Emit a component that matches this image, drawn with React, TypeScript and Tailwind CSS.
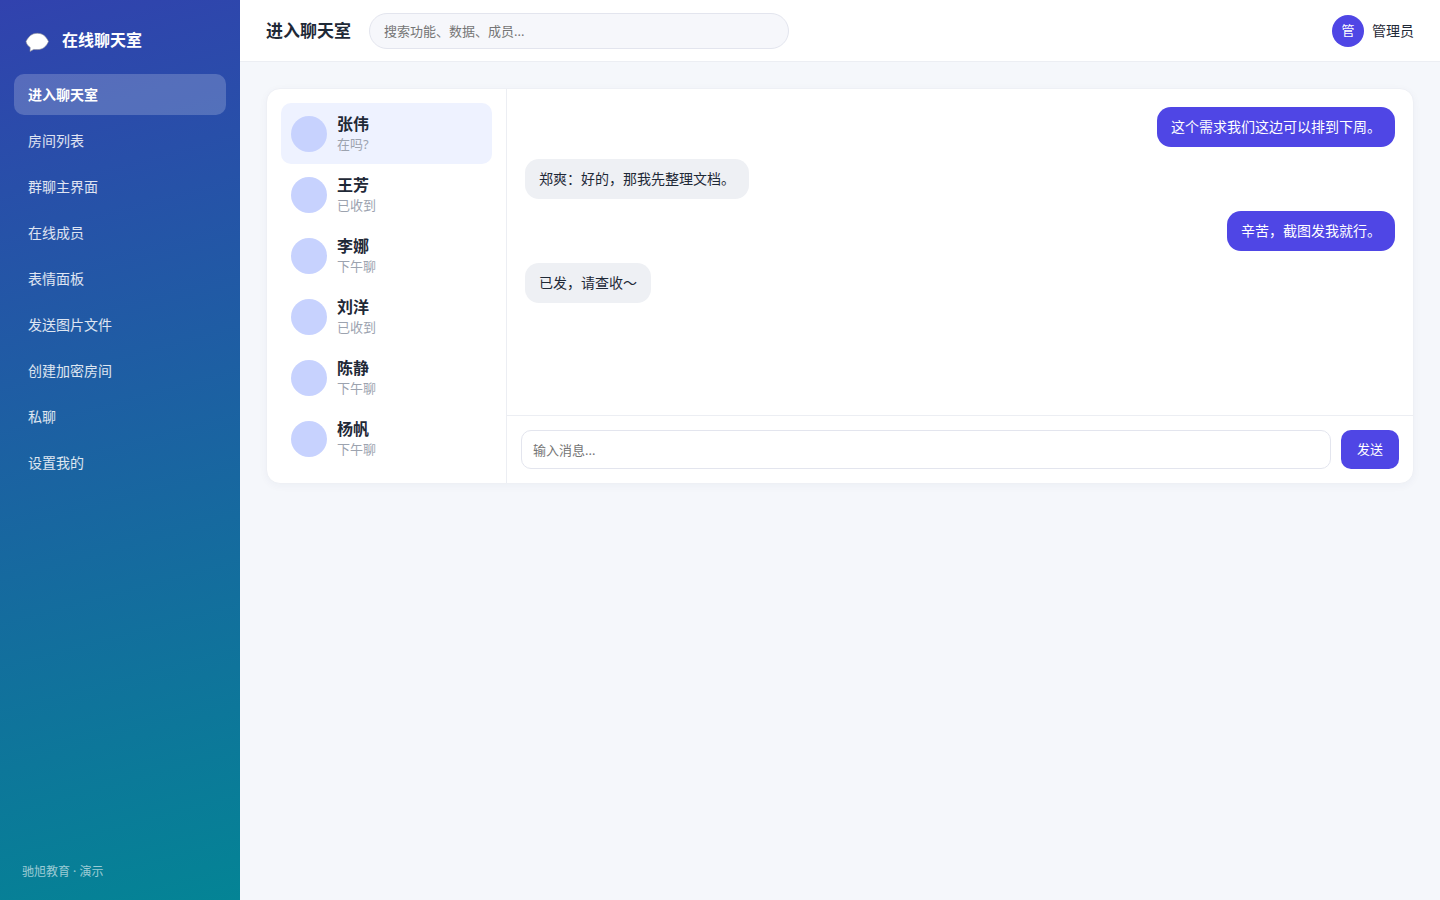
import { useState } from 'react'
import clsx from 'clsx'

const navItems = [
  '进入聊天室',
  '房间列表',
  '群聊主界面',
  '在线成员',
  '表情面板',
  '发送图片文件',
  '创建加密房间',
  '私聊',
  '设置我的',
]

const contacts = [
  { name: '张伟', last: '在吗?' },
  { name: '王芳', last: '已收到' },
  { name: '李娜', last: '下午聊' },
  { name: '刘洋', last: '已收到' },
  { name: '陈静', last: '下午聊' },
  { name: '杨帆', last: '下午聊' },
]

const messages = [
  { mine: true, text: '这个需求我们这边可以排到下周。' },
  { mine: false, text: '郑爽：好的，那我先整理文档。' },
  { mine: true, text: '辛苦，截图发我就行。' },
  { mine: false, text: '已发，请查收～' },
]

function BubbleIcon() {
  return (
    <svg viewBox="0 0 24 24" className="size-6" aria-hidden="true">
      <path
        d="M12.300 5.300C7 5.300 3.800 8.200 1 13.500c.7 2.800 2 4.500 4.200 5.900L5 23.500l3.700-2.100c1.200.2 2.400.2 3.600.2 5.500 0 9-3 11.200-8.100C21 8.200 17.600 5.300 12.300 5.300z"
        fill="#fff"
        stroke="#8d8f9b"
        strokeWidth="0.600"
        strokeLinejoin="round"
      />
    </svg>
  )
}

function Sidebar() {
  const [active, setActive] = useState(0)

  return (
    <aside className="flex w-60 shrink-0 flex-col bg-[linear-gradient(165deg,#3142ae,#048495)] px-3.5 pt-[22px] pb-5 text-white">
      <div className="flex items-center gap-[13px] px-[11px] pb-4">
        <BubbleIcon />
        <span className="text-base leading-9 font-bold">在线聊天室</span>
      </div>
      <nav className="flex flex-col gap-[5px]">
        {navItems.map((item, i) => (
          <a
            key={item}
            href="#"
            onClick={() => setActive(i)}
            className={clsx(
              'rounded-[10px] px-3.5 py-2.5 text-sm leading-[21px]',
              i === active ? 'bg-white/20 font-bold' : 'text-white/85',
            )}
          >
            {item}
          </a>
        ))}
      </nav>
      <p className="mt-auto px-2 text-xs leading-4 text-white/60">驰旭教育 · 演示</p>
    </aside>
  )
}

function Header() {
  return (
    <header className="flex h-[62px] items-center gap-[18px] border-b border-[#eceef3] bg-white px-[26px]">
      <h1 className="text-[17px] leading-6 font-bold">进入聊天室</h1>
      <input
        type="search"
        aria-label="搜索"
        placeholder="搜索功能、数据、成员..."
        className="h-9 w-[420px] rounded-full border border-[#e3e5ee] bg-[#f6f7fb] px-3.5 text-[13px] outline-none placeholder:text-[#757575]"
      />
      <div className="ml-auto flex items-center gap-2 text-sm">
        <span className="flex size-8 items-center justify-center rounded-full bg-[#4f46e5] text-[13px] text-white">
          管
        </span>
        管理员
      </div>
    </header>
  )
}

function ContactList() {
  const [selected, setSelected] = useState(0)

  return (
    <ul className="w-60 shrink-0 border-r border-[#eceef3] p-3.5">
      {contacts.map((c, i) => (
        <li key={c.name}>
          <button
            type="button"
            onClick={() => setSelected(i)}
            className={clsx(
              'flex w-full items-center gap-2.5 rounded-[10px] p-2.5 text-left',
              i === selected && 'bg-[#eef2ff]',
            )}
          >
            <span className="size-9 rounded-full bg-[#c7d2fe]" />
            <span className="flex flex-col">
              <span className="text-base leading-[22px] font-bold">{c.name}</span>
              <span className="text-[13px] leading-[19px] text-[#9ca3af]">{c.last}</span>
            </span>
          </button>
        </li>
      ))}
    </ul>
  )
}

function Conversation() {
  const [draft, setDraft] = useState('')

  return (
    <section className="flex min-w-0 flex-1 flex-col">
      <div className="flex flex-1 flex-col gap-3 p-[18px]">
        {messages.map(m => (
          <div
            key={m.text}
            className={clsx(
              'max-w-[70%] rounded-[14px] px-3.5 py-2.5 text-sm leading-5',
              m.mine ? 'self-end bg-[#4f46e5] text-white' : 'self-start bg-[#eef0f4]',
            )}
          >
            {m.text}
          </div>
        ))}
      </div>
      <form
        onSubmit={e => e.preventDefault()}
        className="flex gap-2.5 border-t border-[#eceef3] p-3.5 text-[13px]"
      >
        <input
          value={draft}
          onChange={e => setDraft(e.target.value)}
          aria-label="输入消息"
          placeholder="输入消息..."
          className="h-[39px] min-w-0 flex-1 rounded-[10px] border border-[#e3e5ee] bg-white px-[11px] outline-none placeholder:text-[#757575]"
        />
        <button type="submit" className="rounded-[10px] bg-[#4f46e5] px-4 text-white">
          发送
        </button>
      </form>
    </section>
  )
}

export default function App() {
  return (
    <div className="flex min-h-screen bg-[#f5f7fb] font-['Noto_Sans','Noto_Sans_CJK_SC',sans-serif] text-[#1f2937]">
      <Sidebar />
      <div className="flex min-w-0 flex-1 flex-col">
        <Header />
        <main className="p-[26px]">
          <div className="flex overflow-hidden rounded-[14px] border border-[#eef0f5] bg-white shadow-[0_2px_8px_rgba(30,41,90,0.04)]">
            <ContactList />
            <Conversation />
          </div>
        </main>
      </div>
    </div>
  )
}
